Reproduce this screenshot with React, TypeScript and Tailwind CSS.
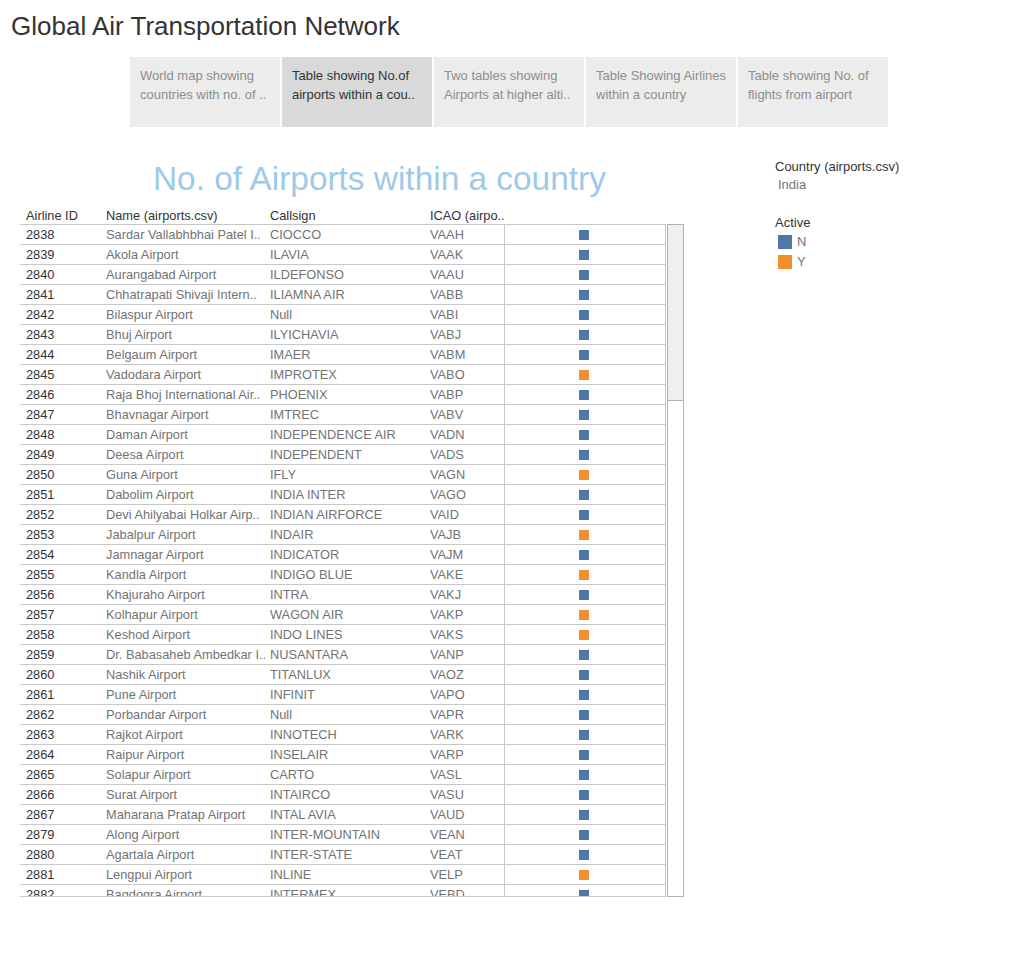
import React from "react";

type Row = [string, string, string, string, "N" | "Y"];

const rows: Row[] = [
  ["2838", "Sardar Vallabhbhai Patel I..", "CIOCCO", "VAAH", "N"],
  ["2839", "Akola Airport", "ILAVIA", "VAAK", "N"],
  ["2840", "Aurangabad Airport", "ILDEFONSO", "VAAU", "N"],
  ["2841", "Chhatrapati Shivaji Intern..", "ILIAMNA AIR", "VABB", "N"],
  ["2842", "Bilaspur Airport", "Null", "VABI", "N"],
  ["2843", "Bhuj Airport", "ILYICHAVIA", "VABJ", "N"],
  ["2844", "Belgaum Airport", "IMAER", "VABM", "N"],
  ["2845", "Vadodara Airport", "IMPROTEX", "VABO", "Y"],
  ["2846", "Raja Bhoj International Air..", "PHOENIX", "VABP", "N"],
  ["2847", "Bhavnagar Airport", "IMTREC", "VABV", "N"],
  ["2848", "Daman Airport", "INDEPENDENCE AIR", "VADN", "N"],
  ["2849", "Deesa Airport", "INDEPENDENT", "VADS", "N"],
  ["2850", "Guna Airport", "IFLY", "VAGN", "Y"],
  ["2851", "Dabolim Airport", "INDIA INTER", "VAGO", "N"],
  ["2852", "Devi Ahilyabai Holkar Airp..", "INDIAN AIRFORCE", "VAID", "N"],
  ["2853", "Jabalpur Airport", "INDAIR", "VAJB", "Y"],
  ["2854", "Jamnagar Airport", "INDICATOR", "VAJM", "N"],
  ["2855", "Kandla Airport", "INDIGO BLUE", "VAKE", "Y"],
  ["2856", "Khajuraho Airport", "INTRA", "VAKJ", "N"],
  ["2857", "Kolhapur Airport", "WAGON AIR", "VAKP", "Y"],
  ["2858", "Keshod Airport", "INDO LINES", "VAKS", "Y"],
  ["2859", "Dr. Babasaheb Ambedkar I..", "NUSANTARA", "VANP", "N"],
  ["2860", "Nashik Airport", "TITANLUX", "VAOZ", "N"],
  ["2861", "Pune Airport", "INFINIT", "VAPO", "N"],
  ["2862", "Porbandar Airport", "Null", "VAPR", "N"],
  ["2863", "Rajkot Airport", "INNOTECH", "VARK", "N"],
  ["2864", "Raipur Airport", "INSELAIR", "VARP", "N"],
  ["2865", "Solapur Airport", "CARTO", "VASL", "N"],
  ["2866", "Surat Airport", "INTAIRCO", "VASU", "N"],
  ["2867", "Maharana Pratap Airport", "INTAL AVIA", "VAUD", "N"],
  ["2879", "Along Airport", "INTER-MOUNTAIN", "VEAN", "N"],
  ["2880", "Agartala Airport", "INTER-STATE", "VEAT", "N"],
  ["2881", "Lengpui Airport", "INLINE", "VELP", "Y"],
  ["2882", "Bagdogra Airport", "INTERMEX", "VEBD", "N"],
];

const tabs = [
  ["World map showing", "countries with no. of .."],
  ["Table showing No.of", "airports within a cou.."],
  ["Two tables showing", "Airports at higher alti.."],
  ["Table Showing Airlines", "within a country"],
  ["Table showing No. of", "flights from airport"],
];

export default function App() {
  return (
    <div className="w-[1015px] h-[963px] bg-white font-['Liberation_Sans',Arial,sans-serif] text-[#333]">
      <div className="pl-[11px] pt-[11px] text-[26px] leading-[31px] text-[#333] whitespace-nowrap">
        Global Air Transportation Network
      </div>
      <div className="ml-[130px] mt-[15px] flex gap-[2px]">
        {tabs.map((t, i) => (
          <div
            key={i}
            className={
              i === 1
                ? "w-[150px] h-[70px] bg-[#d9d9d9] px-[10px] pt-[9px] text-[13px] leading-[19px] text-[#333]"
                : "w-[150px] h-[70px] bg-[#ececec] px-[10px] pt-[9px] text-[13px] leading-[19px] text-[#8c8c8c]"
            }
          >
            <div className="whitespace-nowrap">{t[0]}</div>
            <div className="whitespace-nowrap">{t[1]}</div>
          </div>
        ))}
      </div>
      <div className="flex">
        <div className="w-[700px] pl-[20px]">
          <div className="pl-[133px] pt-[33px] text-[33.4px] leading-[38px] text-[#9ecae9] whitespace-nowrap">
            No. of Airports within a country
          </div>
          <div className="mt-[6px] flex h-[20px] pt-[4px] items-center text-[12.8px] text-[#333] whitespace-nowrap">
            <div className="w-[80px] pl-[6px]">Airline ID</div>
            <div className="w-[164px] pl-[6px]">Name (airports.csv)</div>
            <div className="w-[160px] pl-[6px]">Callsign</div>
            <div className="w-[80px] pl-[6px]">ICAO (airpo..</div>
          </div>
          <div className="flex">
            <div className="w-[646px] h-[673px] border-t border-b border-r border-[#c8c8c8] overflow-hidden relative">
              <div className="absolute left-[484px] top-0 bottom-0 w-px bg-[#c8c8c8]" />
              {rows.map((r) => (
                <div
                  key={r[0]}
                  className="flex h-[20px] pt-[1px] items-center border-b border-[#c8c8c8] text-[12.8px] leading-[18px] whitespace-nowrap"
                >
                  <div className="w-[80px] pl-[6px] text-[#333]">{r[0]}</div>
                  <div className="w-[164px] pl-[6px] text-[#737373]">{r[1]}</div>
                  <div className="w-[160px] pl-[6px] text-[#737373]">{r[2]}</div>
                  <div className="w-[80px] pl-[6px] text-[#737373]">{r[3]}</div>
                  <div className="flex-1 flex justify-center pr-[1px]">
                    <div
                      className={
                        r[4] === "Y" ? "w-[10px] h-[10px] bg-[#f28e2b]" : "w-[10px] h-[10px] bg-[#4e79a7]"
                      }
                    />
                  </div>
                </div>
              ))}
            </div>
            <div className="ml-[1px] w-[17px] h-[673px] border border-[#b3b3b3] flex flex-col">
              <div className="h-[176px] bg-[#efefef] border-b border-[#b3b3b3]" />
            </div>
          </div>
        </div>
        <div className="pl-[75px] pt-[31px] text-[13px]">
          <div className="leading-[18px] text-[#333] whitespace-nowrap">Country (airports.csv)</div>
          <div className="pl-[3px] leading-[18px] text-[#737373]">India</div>
          <div className="mt-[20px] leading-[18px] text-[#333]">Active</div>
          <div className="pl-[3px] flex items-center gap-[5px] h-[20px] text-[#737373]">
            <div className="w-[14px] h-[14px] bg-[#4e79a7]" />
            <span>N</span>
          </div>
          <div className="pl-[3px] flex items-center gap-[5px] h-[20px] text-[#737373]">
            <div className="w-[14px] h-[14px] bg-[#f28e2b]" />
            <span>Y</span>
          </div>
        </div>
      </div>
    </div>
  );
}
